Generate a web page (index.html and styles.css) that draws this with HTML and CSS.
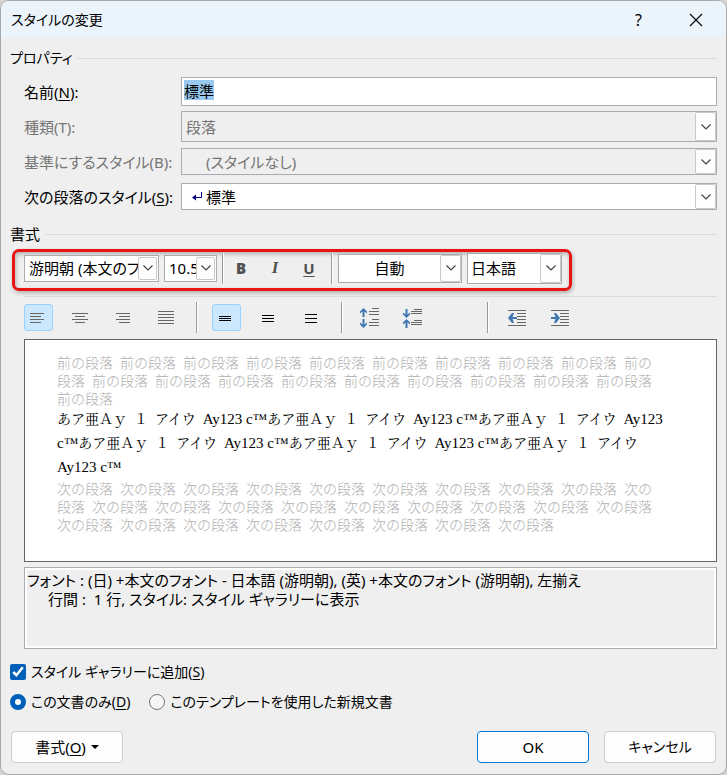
FILE: index.html
```html
<!DOCTYPE html>
<html lang="ja">
<head>
<meta charset="utf-8">
<title>スタイルの変更</title>
<link rel="stylesheet" href="styles.css">
</head>
<body>
<svg class="defs" width="0" height="0" aria-hidden="true">
  <symbol id="chevron" viewBox="0 0 12 8"><path d="M1.5 1.5 6 6l4.500-4.500" fill="none" stroke="#444" stroke-width="1.200"/></symbol>
  <symbol id="up" viewBox="0 0 7 9"><path d="M3.500 0 7 3.500V5.500L4.500 3.500V9h-2V3.500L0 5.500v-2z" fill="#4177b0"/></symbol>
</svg>
<main class="dialog">
  <header class="titlebar">
    <h1>スタイルの変更</h1>
    <button class="caption" type="button" aria-label="ヘルプ">?</button>
    <button class="caption" type="button" aria-label="閉じる"><svg width="14" height="14" viewBox="0 0 14 14"><path d="M1 1l12 12M13 1 1 13" stroke="#111" stroke-width="1.300"/></svg></button>
  </header>
  <form class="content">
    <h2 class="legend compact">プロパティ</h2>
    <div class="fields">
      <label for="name">名前(<u>N</u>):</label>
      <input id="name" class="name" type="text" value="標準">
      <label class="off" for="kind">種類(T):</label>
      <div class="combo tall off"><select id="kind" disabled><option>段落</option></select><span class="drop"><svg><use href="#chevron"/></svg></span></div>
      <label class="off" for="base">基準にするスタイル(B):</label>
      <div class="combo off indent"><select id="base" disabled><option>(スタイルなし)</option></select><span class="drop"><svg><use href="#chevron"/></svg></span></div>
      <label for="next">次の段落のスタイル(<u>S</u>):</label>
      <div class="combo marked"><svg class="return" width="10" height="9" viewBox="0 0 10 9"><path d="M9.500 0v5.500H2" fill="none" stroke="#00007f"/><path d="M0 5.500 4 2.500v6z" fill="#00007f"/></svg><select id="next"><option>標準</option></select><span class="drop"><svg><use href="#chevron"/></svg></span></div>
    </div>

    <h2 class="legend second">書式</h2>
    <div class="fontbar">
      <div class="combo font"><select aria-label="フォント"><option>游明朝 (本文のフォント - 日本語)</option></select><span class="drop"><svg><use href="#chevron"/></svg></span></div>
      <div class="combo size"><select aria-label="サイズ"><option>10.5</option></select><span class="drop"><svg><use href="#chevron"/></svg></span></div>
      <span class="sep"></span>
      <div class="faces">
        <button class="glyph" type="button"><b>B</b></button>
        <button class="glyph italic" type="button"><i>I</i></button>
        <button class="glyph" type="button"><u>U</u></button>
      </div>
      <span class="sep"></span>
      <div class="combo color"><select aria-label="フォントの色"><option>自動</option></select><span class="drop"><svg><use href="#chevron"/></svg></span></div>
      <div class="combo lang"><select aria-label="言語"><option>日本語</option></select><span class="drop"><svg><use href="#chevron"/></svg></span></div>
    </div>

    <div class="parabar">
      <button class="tool on" type="button" aria-label="左揃え"><svg viewBox="0 0 19 19"><path d="M1 5.500h14M1 8.500h11M1 11.500h14M1 14.500h11"/></svg></button>
      <button class="tool" type="button" aria-label="中央揃え"><svg viewBox="0 0 19 19"><path d="M0 5.500h16M3 8.500h10M0 11.500h16M3 14.500h10"/></svg></button>
      <button class="tool" type="button" aria-label="右揃え"><svg viewBox="0 0 19 19"><path d="M1 5.500h14M4 8.500h11M1 11.500h14M4 14.500h11"/></svg></button>
      <button class="tool" type="button" aria-label="両端揃え"><svg viewBox="0 0 19 19"><path d="M0 3.500h16M0 6.500h16M0 9.500h16M0 12.500h16M0 15.500h16"/></svg></button>
      <span class="sep"></span>
      <button class="tool on dark" type="button" aria-label="1 行"><svg viewBox="0 0 19 19"><path d="M2 8.500h12M2 10.500h12M2 12.500h12"/></svg></button>
      <button class="tool dark" type="button" aria-label="1.5 行"><svg viewBox="0 0 19 19"><path d="M2 7.500h12M2 10.500h12M2 13.500h12"/></svg></button>
      <button class="tool dark" type="button" aria-label="2 行"><svg viewBox="0 0 19 19"><path d="M2 6.500h12M2 10.500h12M2 14.500h12"/></svg></button>
      <span class="sep"></span>
      <button class="tool wide" type="button" aria-label="段落間隔を広げる"><svg viewBox="2 0 19 20"><use href="#up" width="7" height="9"/><use href="#up" width="7" height="9" transform="translate(0 20) scale(1 -1)"/><path d="M12 .5h7M9 3.500h10M9 6.500h10M12 11.500h7M9 14.500h10M9 17.500h10"/></svg></button>
      <button class="tool wide" type="button" aria-label="段落間隔を狭める"><svg viewBox="2 0 19 20"><use href="#up" width="7" height="9" transform="translate(0 10) scale(1 -1)"/><use href="#up" y="11" width="7" height="9"/><path d="M11 1.500h8M8 3.500h11M8 5.500h11M11 12.500h8M8 14.500h11M8 16.500h11"/></svg></button>
      <span class="sep far"></span>
      <button class="tool" type="button" aria-label="インデントを減らす"><svg viewBox="0 0 19 19"><path d="M0 2.500h18M9 5.500h9M9 8.500h9M9 11.500h9M9 14.500h9M0 17.500h18"/><path class="blue" d="M0 10l4-5h2L4.500 9H9v2H4.500L6 15H4z"/></svg></button>
      <button class="tool" type="button" aria-label="インデントを増やす"><svg viewBox="0 0 19 19"><path d="M0 2.500h18M9 5.500h9M9 8.500h9M9 11.500h9M9 14.500h9M0 17.500h18"/><path class="blue" d="M9 10 5 5H3l1.500 4H0v2h4.500L3 15h2z"/></svg></button>
    </div>

    <div class="preview">
      <p class="near">前の段落&ensp;前の段落&ensp;前の段落&ensp;前の段落&ensp;前の段落&ensp;前の段落&ensp;前の段落&ensp;前の段落&ensp;前の段落&ensp;前の<br>段落&ensp;前の段落&ensp;前の段落&ensp;前の段落&ensp;前の段落&ensp;前の段落&ensp;前の段落&ensp;前の段落&ensp;前の段落&ensp;前の段落<br>前の段落</p>
      <p class="sample">あア亜Ａｙ&ensp;１&ensp;アイウ&ensp;<span>Ay123 c™</span>あア亜Ａｙ&ensp;１&ensp;アイウ&ensp;<span>Ay123 c™</span>あア亜Ａｙ&ensp;１&ensp;アイウ&ensp;<span>Ay123</span><br><span>c™</span>あア亜Ａｙ&ensp;１&ensp;アイウ&ensp;<span>Ay123 c™</span>あア亜Ａｙ&ensp;１&ensp;アイウ&ensp;<span>Ay123 c™</span>あア亜Ａｙ&ensp;１&ensp;アイウ<br><span>Ay123 c™</span></p>
      <p class="near">次の段落&ensp;次の段落&ensp;次の段落&ensp;次の段落&ensp;次の段落&ensp;次の段落&ensp;次の段落&ensp;次の段落&ensp;次の段落&ensp;次の<br>段落&ensp;次の段落&ensp;次の段落&ensp;次の段落&ensp;次の段落&ensp;次の段落&ensp;次の段落&ensp;次の段落&ensp;次の段落&ensp;次の段落<br>次の段落&ensp;次の段落&ensp;次の段落&ensp;次の段落&ensp;次の段落&ensp;次の段落&ensp;次の段落&ensp;次の段落</p>
    </div>
    <div class="summary">
      <p>フォント : (日) +本文のフォント - 日本語 (游明朝), (英) +本文のフォント (游明朝), 左揃え</p>
      <p class="inner">行間 :&nbsp; 1 行, スタイル: スタイル ギャラリーに表示</p>
    </div>

    <div class="choices compact">
      <label><input type="checkbox" checked><span>スタイル ギャラリーに追加(<u>S</u>)</span></label>
    </div>
    <div class="choices compact">
      <label><input type="radio" name="scope" checked><span>この文書のみ(<u>D</u>)</span></label>
      <label><input type="radio" name="scope"><span>このテンプレートを使用した新規文書</span></label>
    </div>
    <footer class="actions">
      <button class="push menu" type="button">書式(<u>O</u>)<svg width="8" height="4" viewBox="0 0 8 4"><path d="M0 0h8L4 4z"/></svg></button>
      <button class="push primary" type="button">OK</button>
      <button class="push compact" type="button">キャンセル</button>
    </footer>
  </form>
</main>
</body>
</html>
```
FILE: styles.css
```css
* { box-sizing: border-box; }
body {
  margin: 0;
  background: #d4d4d4;
  color: #000;
  font: 15px/20px "Noto Sans", "Noto Sans CJK JP", sans-serif;
  font-feature-settings: "palt";
}
button, input, select { font: inherit; font-feature-settings: inherit; color: inherit; }
h1, h2, p { margin: 0; font-size: inherit; font-weight: 400; }
u { text-underline-offset: 2px; text-decoration-thickness: 1px; }
.defs { position: absolute; }

.dialog {
  min-height: 100vh;
  border: 1px solid #a8a8a8;
  border-radius: 9px;
  background: #efefef;
  overflow: hidden;
}
.titlebar {
  display: flex;
  align-items: center;
  height: 37px;
  padding: 0 2px 0 10px;
  background: #ebf4fb;
}
.titlebar h1 { flex: 1; font-size: 14px; }
.caption {
  display: grid;
  place-items: center;
  width: 57px;
  height: 36px;
  padding: 0;
  border: 0;
  background: none;
  font-size: 16px;
}

.content { padding: 9px 9px 11px; }
.legend {
  display: flex;
  align-items: center;
  gap: 5px;
  height: 22px;
}
.legend::after { content: ""; flex: 1; height: 1px; background: #dadada; }
.legend.second { margin-top: 9px; }

.fields {
  display: grid;
  grid-template-columns: 157px 1fr;
  grid-auto-rows: 35px;
  align-items: center;
  margin: 5px 0 0 14px;
}
.fields label { white-space: nowrap; }
.off { color: #757575; }
.name {
  width: 100%;
  height: 29px;
  padding: 0 2px 2px;
  border: 1px solid #ababb0;
  background: linear-gradient(#99c9ef, #99c9ef) 2px 2px / 30px 20px no-repeat #fff;
}

.combo {
  display: flex;
  align-items: center;
  height: 27px;
  border: 1px solid #ababb0;
  background: #fff;
}
.combo select {
  flex: 1;
  min-width: 0;
  height: 100%;
  padding: 0 0 0 4px;
  border: 0;
  appearance: none;
  background: none;
  opacity: 1;
}
.combo.off { background: #efefef; }
.combo.tall { height: 31px; }
.combo.indent select { padding-left: 24px; }
.combo.marked { padding-left: 10px; }
.drop {
  display: grid;
  place-items: center;
  align-self: stretch;
  flex: none;
  width: 21px;
  border: 1px solid #c8c8c8;
  border-radius: 2px;
  background: #fdfdfd;
}
.drop svg { width: 12px; height: 8px; }

.fontbar {
  display: flex;
  align-items: center;
  gap: 5px;
  width: 560px;
  height: 42px;
  margin: 4px 0 5px 2px;
  padding: 0 7px 4px 9px;
  border: 3px solid #e81414;
  border-radius: 7px;
  box-shadow: 1px 2px 4px #0004, inset 1px 2px 4px #0004;
}
.fontbar .drop { width: 19px; }
.fontbar .combo select { padding-left: 3px; }
.font, .size { height: 27px; padding: 1px; }
.font { width: 135px; }
.size { width: 53px; }
.color { width: 124px; height: 29px; }
.fontbar .color select { padding: 0; text-align: center; text-align-last: center; }
.lang { width: 95px; height: 31px; }
.fontbar .color .drop, .fontbar .lang .drop { width: 21px; }
.sep {
  flex: none;
  width: 2px;
  height: 31px;
  border-left: 1px solid #999;
  border-right: 1px solid #fff;
}
.faces { display: flex; flex: 1; margin-left: -5px; }
.glyph {
  flex: 1;
  padding: 0;
  border: 0;
  background: none;
  color: #505050;
  font-weight: 700;
}
.italic { font-family: "Liberation Serif", serif; font-size: 17px; }

.parabar {
  display: flex;
  align-items: center;
  gap: 14px;
  margin: 0 0 6px 14px;
  padding-top: 5px;
  border-top: 1px solid #dadada;
}
.tool {
  display: grid;
  place-items: center;
  width: 29px;
  height: 27px;
  padding: 0;
  border: 1px solid transparent;
  border-radius: 3px;
  background: none;
}
.tool.on { border-color: #99d1ff; background: #cce8ff; }
.tool svg { width: 19px; height: 19px; stroke: #666; fill: none; }
.tool.wide svg { height: 20px; overflow: visible; }
.tool.dark svg { stroke: #000; }
.tool use { stroke: none; }
.tool .blue { fill: #4177b0; stroke: none; }
.far { margin-left: 44px; }

.preview {
  margin-left: 14px;
  padding: 14px 32px 27px;
  border: 1px solid #646464;
  background: #fff;
  font-size: 14px;
  font-feature-settings: normal;
  white-space: nowrap;
  overflow: hidden;
}
.near { color: #b0b0b0; font-family: "Liberation Sans", "Noto Sans CJK JP", sans-serif; font-weight: 300; line-height: 18px; }
.sample { font-family: "Liberation Serif", "Noto Serif CJK JP", "Noto Sans CJK JP", serif; line-height: 24px; }
.sample span { font-size: 15px; line-height: 16px; }

.summary {
  min-height: 82px;
  margin: 5px 0 8px 14px;
  padding: 3px 2px;
  border: 1px solid #ababb0;
  box-shadow: inset 0 0 0 2px #fff;
  line-height: 19px;
}
.inner { padding-left: 21px; }

.choices { display: flex; gap: 19px; height: 30px; }
.choices label { display: flex; align-items: center; gap: 5px; }
.choices input {
  flex: none;
  width: 16px;
  height: 16px;
  margin: 0;
  accent-color: #005fb8;
}
.choices [type="radio"] {
  appearance: none;
  border: 1px solid #777;
  border-radius: 50%;
  background: #f6f6f6;
}
.choices [type="radio"]:checked { border: 5px solid #005fb8; background: #fff; }

.actions {
  display: flex;
  align-items: center;
  gap: 15px;
  margin-top: 14px;
  padding: 0 1px;
}
.push {
  width: 112px;
  height: 32px;
  padding: 0;
  border: 1px solid #ccc;
  border-radius: 4px;
  background: #fdfdfd;
}
.menu { margin-right: auto; }
.menu svg { margin: 0 0 4px 5px; }
.primary { border-color: #0078d4; }

.legend.compact, .choices.compact, .push.compact { font-size: 14px; }
```
